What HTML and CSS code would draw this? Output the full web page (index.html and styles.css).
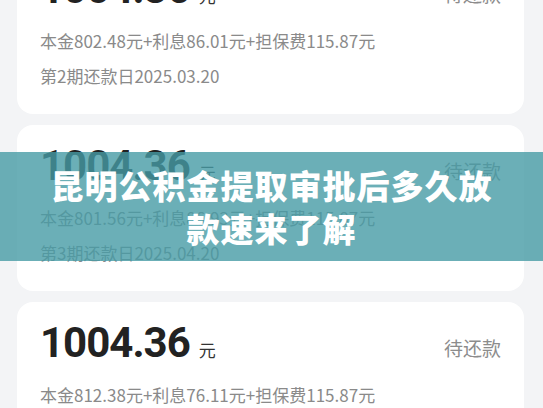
FILE: index.html
```html
<!DOCTYPE html>
<html lang="zh-CN">

<head>
    <meta charset="UTF-8">
    <meta name="viewport" content="width=device-width, initial-scale=1.0">
    <title>昆明公积金提取审批后多久放款</title>
    <link rel="stylesheet" href="styles.css">
</head>

<body>

    <div class="lista-parcelas">
        <div class="parcela">
            <div class="parcela-topo">
                <div class="valor">1004.36<span class="moeda">元</span></div>
                <div class="status">待还款</div>
            </div>
            <p class="detalhe">本金802.48元+利息86.01元+担保费115.87元</p>
            <p class="detalhe">第2期还款日2025.03.20</p>
        </div>

        <div class="parcela">
            <div class="parcela-topo">
                <div class="valor">1004.36<span class="moeda">元</span></div>
                <div class="status">待还款</div>
            </div>
            <p class="detalhe">本金801.56元+利息86.93元+担保费115.87元</p>
            <p class="detalhe">第3期还款日2025.04.20</p>
        </div>

        <div class="parcela">
            <div class="parcela-topo">
                <div class="valor">1004.36<span class="moeda">元</span></div>
                <div class="status">待还款</div>
            </div>
            <p class="detalhe">本金812.38元+利息76.11元+担保费115.87元</p>
            <p class="detalhe">第4期还款日2025.05.20</p>
        </div>
    </div>

    <!-- faixa do título por cima da lista -->
    <div class="faixa-titulo">
        <h1>昆明公积金提取审批后多久放款速来了解</h1>
    </div>

</body>

</html>
```

FILE: styles.css
```css
html,
body {
    height: 100%;
    overflow: hidden;
}

body {
    margin: 0;
    padding: 0;
    background-color: #f3f4f6;
    font-family: "Noto Sans CJK SC", "Noto Sans", sans-serif;
    position: relative;
}

.lista-parcelas {
    display: flex;
    flex-direction: column;
    gap: 11px;
    margin: -52px 19px 0 17px;
}

.parcela {
    background-color: #fff;
    border-radius: 16px;
    padding: 23px 23px 21px 23px;
}

.parcela-topo {
    display: flex;
    justify-content: space-between;
    align-items: center;
    height: 42px;
    margin-bottom: 10px;
}

.valor {
    font-family: Roboto, "Noto Sans CJK SC", sans-serif;
    font-size: 42px;
    line-height: 42px;
    font-weight: bold;
    letter-spacing: -1px;
    color: #222;
}

.moeda {
    font-family: "Noto Sans CJK SC", sans-serif;
    font-size: 17px;
    font-weight: normal;
    letter-spacing: 0;
    color: #333;
    margin-left: 9px;
}

.status {
    font-size: 19px;
    color: #8c8c8c;
    margin-top: 2px;
}

.detalhe {
    margin: 0;
    font-size: 17px;
    line-height: 35px;
    color: #8a8a8a;
}

.faixa-titulo {
    position: absolute;
    top: 152px;
    left: 0;
    right: 0;
    height: 109px;
    background-color: rgba(70, 155, 165, 0.8);
    display: flex;
    align-items: center;
    justify-content: center;
}

.faixa-titulo h1 {
    margin: 0;
    width: 460px;
    text-align: center;
    font-size: 33px;
    line-height: 43px;
    letter-spacing: 1px;
    font-weight: 900;
    color: #fff;
}
```
